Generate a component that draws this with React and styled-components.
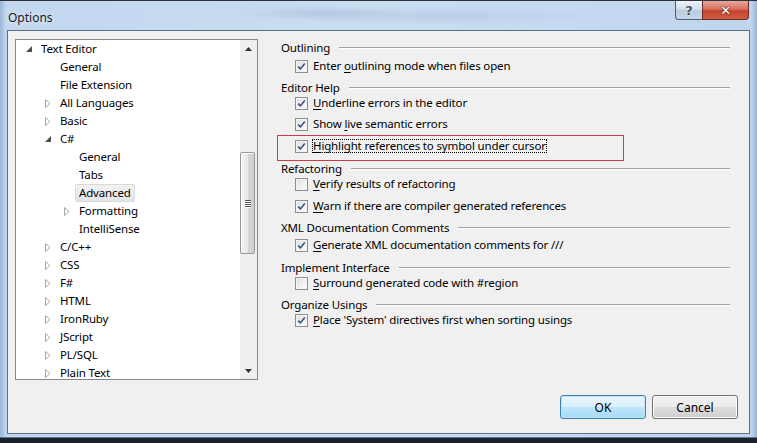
import React from "react";
import styled, { createGlobalStyle } from "styled-components";

const GlobalStyle = createGlobalStyle`
  html, body {
    margin: 0;
    padding: 0;
    background: #1b222c;
  }
  body {
    font-family: "Noto Sans", "Open Sans", sans-serif;
    font-size: 11.5px;
    letter-spacing: -0.15px;
    color: #000;
  }
`;

const tree = [
  { label: "Text Editor", level: 0, exp: "open" },
  { label: "General", level: 1 },
  { label: "File Extension", level: 1 },
  { label: "All Languages", level: 1, exp: "closed" },
  { label: "Basic", level: 1, exp: "closed" },
  { label: "C#", level: 1, exp: "open" },
  { label: "General", level: 2 },
  { label: "Tabs", level: 2 },
  { label: "Advanced", level: 2, selected: true },
  { label: "Formatting", level: 2, exp: "closed" },
  { label: "IntelliSense", level: 2 },
  { label: "C/C++", level: 1, exp: "closed" },
  { label: "CSS", level: 1, exp: "closed" },
  { label: "F#", level: 1, exp: "closed" },
  { label: "HTML", level: 1, exp: "closed" },
  { label: "IronRuby", level: 1, exp: "closed" },
  { label: "JScript", level: 1, exp: "closed" },
  { label: "PL/SQL", level: 1, exp: "closed" },
  { label: "Plain Text", level: 1, exp: "closed" },
];

// "_" marks the access key letter
const options = [
  { type: "group", text: "Outlining", gap: 0 },
  { type: "check", text: "Enter _outlining mode when files open", on: true, gap: 3 },
  { type: "group", text: "Editor Help", gap: 5 },
  { type: "check", text: "_Underline errors in the editor", on: true, gap: 0 },
  { type: "check", text: "Show _live semantic errors", on: true, gap: 5 },
  { type: "check", text: "_Highlight references to symbol under cursor", on: true, gap: 6, marked: true },
  { type: "group", text: "Refactoring", gap: 6 },
  { type: "check", text: "_Verify results of refactoring", on: false, gap: 0 },
  { type: "check", text: "_Warn if there are compiler generated references", on: true, gap: 6 },
  { type: "group", text: "XML Documentation Comments", gap: 5 },
  { type: "check", text: "_Generate XML documentation comments for ///", on: true, gap: 2 },
  { type: "group", text: "Implement Interface", gap: 6 },
  { type: "check", text: "_Surround generated code with #region", on: false, gap: 0 },
  { type: "group", text: "Organize Usings", gap: 5 },
  { type: "check", text: "_Place 'System' directives first when sorting usings", on: true, gap: 0 },
];

const Window = styled.div`
  width: 757px;
  height: 438px;
  box-sizing: border-box;
  display: flex;
  flex-direction: column;
  padding: 0 7px 4px 7px;
  border-top: 1px solid #2c323b;
  background:
    radial-gradient(ellipse 90px 8px at 320px 12px, rgba(160, 178, 205, 0.45), transparent),
    radial-gradient(ellipse 160px 10px at 440px 15px, rgba(165, 188, 215, 0.4), transparent),
    linear-gradient(90deg, #9ab6d8 0px, #c2d7ee 6px, #cadef2 50%, #c0d5ed calc(100% - 6px), #98b4d6 100%);
  box-shadow: inset 0 -1px 0 #5d7594;
`;

const TitleBar = styled.div`
  height: 29px;
  display: flex;
  align-items: flex-start;
`;

const Title = styled.div`
  flex: 1;
  padding: 8px 0 0 1px;
  font-size: 12px;
  letter-spacing: 0;
  color: #1a1a1a;
  text-shadow: 0 0 6px rgba(255, 255, 255, 0.9);
`;

const Caption = styled.div`
  display: flex;
  margin-right: 1px;
`;

const CapButton = styled.div`
  height: 19px;
  display: flex;
  align-items: center;
  justify-content: center;
  box-sizing: border-box;
  border: 1px solid #4f5e72;
  border-top: none;
  font-family: "DejaVu Sans", sans-serif;
  font-weight: bold;
`;

const HelpButton = styled(CapButton)`
  width: 27px;
  border-right: none;
  border-bottom-left-radius: 4px;
  background: linear-gradient(180deg, #eef3f9 0%, #d3dfec 45%, #b9cbe0 55%, #c9d9ea 100%);
  color: #4a5565;
  font-size: 13px;
  text-shadow: 0 0 2px #fff;
`;

const CloseButton = styled(CapButton)`
  width: 47px;
  border-color: #6b2a21;
  border-bottom-right-radius: 4px;
  background: linear-gradient(180deg, #e9a99d 0%, #d7705f 45%, #c2432d 55%, #d25d3f 100%);
  color: #fff;
  font-size: 13px;
  text-shadow: 0 0 2px #5a1a10, 0 0 1px #5a1a10;
`;

const Client = styled.div`
  flex: 1;
  display: flex;
  flex-direction: column;
  border: 1px solid #5f6f86;
  background: #f0f0f0;
  padding: 8px 11px 0 7px;
`;

const Body = styled.div`
  display: flex;
  height: 341px;
`;

const TreeBox = styled.div`
  width: 243px;
  box-sizing: border-box;
  border: 1px solid #828790;
  background: #fff;
  display: flex;
  overflow: hidden;
`;

const TreeList = styled.div`
  flex: 1;
  overflow: hidden;
`;

const TreeRow = styled.div`
  height: 18px;
  display: flex;
  align-items: center;
  padding-left: ${(p) => 5 + p.$level * 19}px;
  white-space: nowrap;
`;

const Expander = styled.span`
  width: 16px;
  height: 18px;
  display: flex;
  align-items: center;
  justify-content: center;
`;

const NodeLabel = styled.span`
  height: 18px;
  box-sizing: border-box;
  line-height: 16px;
  padding: 0 3px;
  border: 1px solid ${(p) => (p.$selected ? "#d9d9d9" : "transparent")};
  border-radius: 2px;
  background: ${(p) =>
    p.$selected ? "linear-gradient(180deg, #f2f2f2, #e5e5e5)" : "transparent"};
`;

const ScrollBar = styled.div`
  width: 17px;
  background: #eeeeee;
  display: flex;
  flex-direction: column;
`;

const Arrow = styled.div`
  height: 17px;
  display: flex;
  align-items: center;
  justify-content: center;
`;

const Track = styled.div`
  flex: 1;
`;

const Thumb = styled.div`
  margin: ${(p) => p.$offset}px 2px 0 0;
  height: 102px;
  box-sizing: border-box;
  border: 1px solid #969696;
  border-radius: 2px;
  background: linear-gradient(90deg, #f4f4f4 0%, #e8e8e8 50%, #d6d6d6 51%, #cfcfcf 100%);
  box-shadow: inset 1px 1px 0 #fff;
  display: flex;
  flex-direction: column;
  align-items: center;
  justify-content: center;
  gap: 1px;
`;

const Grip = styled.div`
  width: 6px;
  height: 1px;
  background: #555;
  box-shadow: 0 1px 0 #fff;
`;

const Panel = styled.div`
  width: 460px;
  margin-left: 19px;
  display: flex;
  flex-direction: column;
`;

const GroupRow = styled.div`
  height: 16px;
  margin-top: ${(p) => p.$gap}px;
  display: flex;
  align-items: center;
  padding-left: 4px;
  white-space: nowrap;
`;

const GroupLine = styled.div`
  flex: 1;
  height: 1px;
  margin: 1px 7px 0 9px;
  background: #a0a0a0;
  box-shadow: 0 1px 0 #fff;
`;

const CheckRow = styled.div`
  position: relative;
  height: 16px;
  margin-top: ${(p) => p.$gap}px;
  display: flex;
  align-items: center;
  padding-left: 18px;
  white-space: nowrap;

  ${(p) =>
    p.$marked &&
    `
    &::after {
      content: "";
      position: absolute;
      left: 0;
      top: -3px;
      width: 347px;
      height: 26px;
      box-sizing: border-box;
      border: 1px solid #cf3a44;
    }
  `}
`;

const Box = styled.span`
  width: 13px;
  height: 13px;
  box-sizing: border-box;
  border: 1px solid #8e8f8f;
  background: linear-gradient(135deg, #dcdcdc 0%, #f2f2f2 60%, #ffffff 100%);
  box-shadow: inset 0 0 0 1px #f4f4f4;
  display: flex;
  align-items: center;
  justify-content: center;
  margin-right: 4px;
`;

const CheckLabel = styled.span`
  border: 1px ${(p) => (p.$focus ? "dotted #000" : "solid transparent")};
  line-height: 12px;
`;

const Key = styled.span`
  text-decoration: underline;
  text-underline-offset: 2px;
`;

const Footer = styled.div`
  margin-top: 15px;
  display: flex;
  justify-content: flex-end;
  gap: 6px;
`;

const Button = styled.button`
  width: 86px;
  height: 24px;
  font-family: inherit;
  font-size: 12px;
  letter-spacing: 0;
  color: #000;
  border-radius: 3px;
  border: 1px solid ${(p) => (p.$default ? "#3c7fb1" : "#707070")};
  background: ${(p) =>
    p.$default
      ? "linear-gradient(180deg, #eaf6fd 0%, #d9f0fc 50%, #bee6fd 51%, #a7d9f5 100%)"
      : "linear-gradient(180deg, #f2f2f2 0%, #ebebeb 50%, #dddddd 51%, #cfcfcf 100%)"};
  box-shadow: inset 0 0 0 1px ${(p) => (p.$default ? "#c4e5f6" : "#fcfcfc")};
  padding: 0;
`;

const ClosedArrow = () => (
  <svg width="6" height="9" viewBox="0 0 6 9">
    <path d="M0.5 0.5 L5 4.5 L0.5 8.5 Z" fill="#fff" stroke="#a6a6a6" />
  </svg>
);

const OpenArrow = () => (
  <svg width="6" height="6" viewBox="0 0 6 6">
    <path d="M6 0 L6 6 L0 6 Z" fill="#4d4d4d" />
  </svg>
);

const Tick = () => (
  <svg width="9" height="9" viewBox="0 0 9 9">
    <path d="M1.2 4.6 L3.4 6.9 L7.8 1.4" fill="none" stroke="#3a4f86" strokeWidth="1.6" />
  </svg>
);

const Mnemonic = ({ text }) => {
  const i = text.indexOf("_");
  if (i < 0) return text;
  return (
    <>
      {text.slice(0, i)}
      <Key>{text[i + 1]}</Key>
      {text.slice(i + 2)}
    </>
  );
};

const Tree = () => (
  <TreeBox>
    <TreeList>
      {tree.map((n, i) => (
        <TreeRow key={i} $level={n.level}>
          <Expander>
            {n.exp === "open" && <OpenArrow />}
            {n.exp === "closed" && <ClosedArrow />}
          </Expander>
          <NodeLabel $selected={n.selected}>{n.label}</NodeLabel>
        </TreeRow>
      ))}
    </TreeList>
    <ScrollBar>
      <Arrow>
        <svg width="7" height="4" viewBox="0 0 7 4">
          <path d="M0 4 L3.5 0 L7 4 Z" fill="#333" />
        </svg>
      </Arrow>
      <Track>
        <Thumb $offset={95}>
          <Grip />
          <Grip />
          <Grip />
          <Grip />
        </Thumb>
      </Track>
      <Arrow>
        <svg width="7" height="4" viewBox="0 0 7 4">
          <path d="M0 0 L7 0 L3.5 4 Z" fill="#333" />
        </svg>
      </Arrow>
    </ScrollBar>
  </TreeBox>
);

const Options = () => (
  <Panel>
    {options.map((o, i) =>
      o.type === "group" ? (
        <GroupRow key={i} $gap={o.gap}>
          {o.text}
          <GroupLine />
        </GroupRow>
      ) : (
        <CheckRow key={i} $gap={o.gap} $marked={o.marked}>
          <Box>{o.on && <Tick />}</Box>
          <CheckLabel $focus={o.marked}>
            <Mnemonic text={o.text} />
          </CheckLabel>
        </CheckRow>
      )
    )}
  </Panel>
);

export default function App() {
  return (
    <>
      <GlobalStyle />
      <Window>
        <TitleBar>
          <Title>Options</Title>
          <Caption>
            <HelpButton>?</HelpButton>
            <CloseButton>✕</CloseButton>
          </Caption>
        </TitleBar>
        <Client>
          <Body>
            <Tree />
            <Options />
          </Body>
          <Footer>
            <Button $default>OK</Button>
            <Button>Cancel</Button>
          </Footer>
        </Client>
      </Window>
    </>
  );
}
